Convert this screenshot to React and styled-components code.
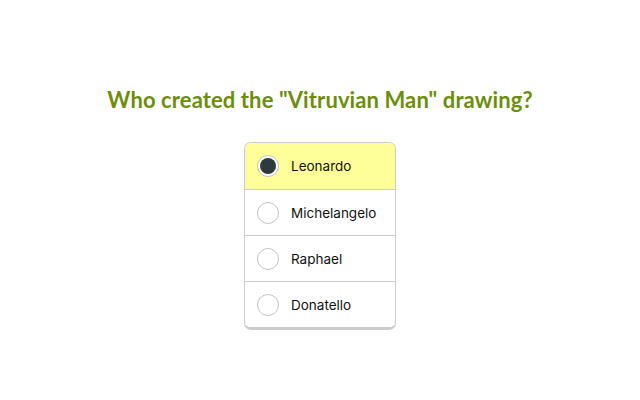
import styled, { createGlobalStyle } from "styled-components";
import { useState } from "react";

const Global = createGlobalStyle`
  html, body {
    margin: 0;
    padding: 0;
    background: #fff;
  }
  body {
    font-family: "Inter", "Liberation Sans", sans-serif;
  }
`;

const Page = styled.div`
  width: 640px;
  height: 400px;
  display: flex;
  flex-direction: column;
  align-items: center;
  padding-top: 86px;
  box-sizing: border-box;
`;

const Title = styled.h1`
  margin: 0 0 28px;
  font-family: "Lato", "Liberation Sans", sans-serif;
  font-size: 22px;
  font-weight: 700;
  letter-spacing: 0.1px;
  color: #6c8e0b;
  line-height: 28px;
`;

const Card = styled.div`
  width: 152px;
  border: 1px solid #cccccc;
  border-bottom-width: 3px;
  border-radius: 7px;
  overflow: hidden;
  box-sizing: border-box;
`;

const Option = styled.label`
  display: flex;
  align-items: center;
  gap: 12px;
  height: 46px;
  padding: 0 12px;
  box-sizing: border-box;
  background: ${(p) => (p.$selected ? "#ffff99" : "#fff")};
  border-top: ${(p) => (p.$first ? "none" : "1px solid #cccccc")};
  cursor: pointer;
  font-size: 13.5px;
  color: #111;
`;

const Radio = styled.span`
  width: 22px;
  height: 22px;
  border-radius: 50%;
  border: 1px solid #c4c4c4;
  box-sizing: border-box;
  background: #fff;
  display: flex;
  align-items: center;
  justify-content: center;
  flex-shrink: 0;
  &::after {
    content: "";
    width: 16px;
    height: 16px;
    border-radius: 50%;
    background: ${(p) => (p.$checked ? "#2e3b3b" : "transparent")};
  }
`;

const options = ["Leonardo", "Michelangelo", "Raphael", "Donatello"];

const App = () => {
  const [picked, setPicked] = useState(0);
  return (
    <Page>
      <Global />
      <Title>Who created the "Vitruvian Man" drawing?</Title>
      <Card>
        {options.map((name, i) => (
          <Option
            key={name}
            $first={i === 0}
            $selected={picked === i}
            onClick={() => setPicked(i)}
          >
            <Radio $checked={picked === i} />
            {name}
          </Option>
        ))}
      </Card>
    </Page>
  );
};

export default App;
